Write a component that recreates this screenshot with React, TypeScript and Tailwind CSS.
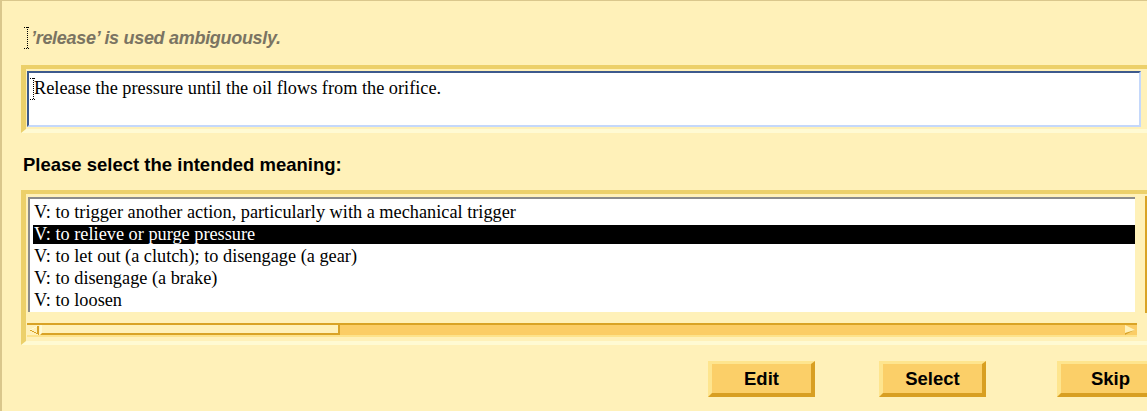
import React from "react";

const IBeam = ({ className }: { className?: string }) => (
  <svg className={className} width="6" height="22" viewBox="0 0 6 22" shapeRendering="crispEdges">
    <path d="M0 0.5H6M0 21.5H6M3 0V22" stroke="#000" strokeWidth="1" strokeDasharray="1 1" fill="none" />
  </svg>
);

const items = [
  "V: to trigger another action, particularly with a mechanical trigger",
  "V: to relieve or purge pressure",
  "V: to let out (a clutch); to disengage (a gear)",
  "V: to disengage (a brake)",
  "V: to loosen",
];

const Btn = ({ label, className }: { label: string; className?: string }) => (
  <div
    className={
      "flex h-[36px] w-[107px] shrink-0 items-center justify-center border-t-[3px] border-l-[4px] border-b-4 border-r-4 border-t-[#fee58e] border-l-[#fee58e] border-b-[#d89f22] border-r-[#d89f22] bg-[#fbcf68] text-[18.5px] font-bold text-black " +
      (className ?? "")
    }
  >
    {label}
  </div>
);

export default function App() {
  return (
    <div className="h-[411px] w-[1147px] overflow-hidden border-t border-l-2 border-[#dac78c] bg-[#fff1b9] font-['Liberation_Sans',Arial,sans-serif] text-black">
      {/* warning */}
      <div className="ml-[22px] mt-[26px] flex h-[22px] items-center">
        <IBeam className="shrink-0" />
        <span className="ml-px text-[18px] font-bold italic leading-[22px] tracking-[-0.3px] text-[#7a7462]">’release’ is used ambiguously.</span>
      </div>

      {/* text box */}
      <div className="ml-[19px] mt-[16px] w-[1130px] border-t-4 border-l-[5px] border-b-4 border-r-4 border-t-[#ecd06a] border-l-[#ecd06a] border-b-[#fffad3] border-r-[#fffad3] pt-[2px] pl-px pb-[2px] pr-[6px]">
        <div className="relative h-[56px] border-t-2 border-l-2 border-b-2 border-r-2 border-t-[#3d5a8d] border-l-[#3d5a8d] border-b-[#c4d8fb] border-r-[#c4d8fb] bg-white pl-[5px] pt-[5px] font-['Liberation_Serif',serif] text-[18.3px] leading-[21px]">
          <IBeam className="absolute left-px top-[5px]" />
          Release the pressure until the oil flows from the orifice.
        </div>
      </div>

      {/* heading */}
      <div className="ml-[21px] mt-[21px] text-[18.5px] font-bold leading-[22px]">Please select the intended meaning:</div>

      {/* list */}
      <div className="ml-[19px] mt-[14px] w-[1130px] border-t-4 border-l-[5px] border-b-4 border-r-4 border-t-[#ecd06a] border-l-[#ecd06a] border-b-[#fffad3] border-r-[#fffad3] pt-[3px] pl-px pb-[4px]">
        <div className="flex">
          <div className="ml-px h-[115px] w-[1107px] border-t-2 border-l-2 border-[#8c8c8c] bg-white pt-[2px] font-['Liberation_Serif',serif] text-[18.3px]">
            {items.map((t, i) => (
              <div key={i} className="flex h-[22px] items-center">
                <div
                  className={
                    "ml-[3px] flex h-[19px] w-full items-center pl-px leading-[19px] " +
                    (i === 1 ? "bg-black text-white" : "")
                  }
                >
                  {t}
                </div>
              </div>
            ))}
          </div>
          <div className="ml-[10px] -mt-px h-[117px] w-[2px] bg-[#d9a326]" />
        </div>

        {/* scrollbar */}
        <div className="mt-[10px] flex h-[14px] w-[1110px] border-t-2 border-b-2 border-t-[#d9a326] border-b-[#fde38c] bg-[#fbcd66]">
          <div className="flex h-[10px] w-[13px] items-center justify-center bg-[#fff1b9]">
            <svg width="10" height="10" viewBox="0 0 10 10" shapeRendering="crispEdges">
              <path d="M9 1L1 5" stroke="#fffad3" strokeWidth="1.2" fill="none" />
              <path d="M1 5L9 9V1" stroke="#d9a326" strokeWidth="1.2" fill="none" />
            </svg>
          </div>
          <div className="h-[10px] w-[300px] border-l-2 border-r-2 border-b-2 border-l-[#fffad3] border-r-[#d9a326] border-b-[#d9a326] bg-[#fff1b9]" />
          <div className="flex-1" />
          <div className="mr-[2px] flex h-[10px] w-[11px] items-center justify-center">
            <svg width="11" height="10" viewBox="0 0 11 10">
              <path d="M1 0L11 5L1 10Z" fill="#fff1b9" />
              <path d="M1 10L11 5L1 8Z" fill="#d9a326" />
            </svg>
          </div>
        </div>
      </div>

      {/* buttons */}
      <div className="mt-[16px] flex">
        <Btn label="Edit" className="ml-[706px]" />
        <Btn label="Select" className="ml-[64px]" />
        <Btn label="Skip" className="ml-[71px]" />
      </div>
    </div>
  );
}
